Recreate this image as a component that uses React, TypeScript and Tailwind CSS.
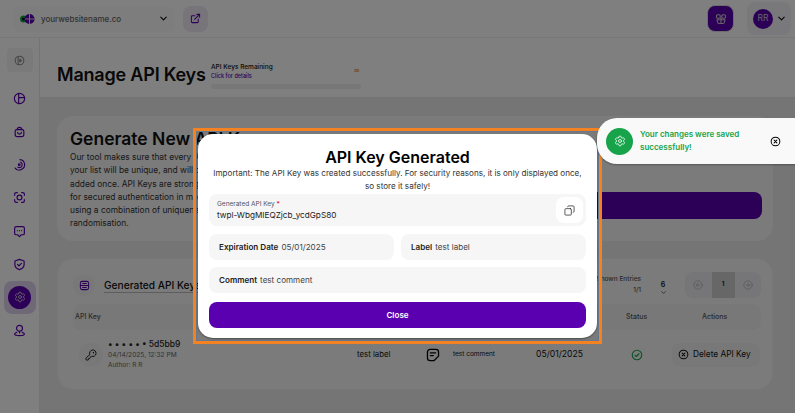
import React from "react";
import {
  ChevronDown, ExternalLink, Settings, KeyRound, CircleArrowLeft, CircleArrowRight, Copy,
} from "lucide-react";

type P = { className?: string; size?: number };
const Svg = ({ className, size = 13, children }: P & { children: React.ReactNode }) => (
  <svg width={size} height={size} viewBox="0 0 24 24" fill="none" stroke="currentColor" strokeWidth={2.2} strokeLinecap="round" strokeLinejoin="round" className={className}>
    {children}
  </svg>
);
const IPie = (p: P) => <Svg {...p}><circle cx="12" cy="12" r="9.5" /><path d="M10.5 2.5v19M10.5 10.5h11" /></Svg>;
const IBag = (p: P) => <Svg {...p}><path d="M7 8.5h10a3 3 0 0 1 3 3v6a4 4 0 0 1-4 4H8a4 4 0 0 1-4-4v-6a3 3 0 0 1 3-3z" /><path d="M8 8.5a4 4 0 0 1 8 0" /><path d="M8.5 13.5a3.5 3.5 0 0 0 7 0" /></Svg>;
const ISpiral = (p: P) => <Svg {...p}><path d="M13 3a9.5 9.5 0 0 1 4 17.5 9.5 9.5 0 0 1-13-2" /><path d="M14 7.5a5.5 5.5 0 0 1 1 9 5.5 5.5 0 0 1-6 .5" /><circle cx="11.5" cy="12.5" r="1.5" /></Svg>;
const IScan = (p: P) => <Svg {...p}><path d="M3 8V6a3 3 0 0 1 3-3h2M16 3h2a3 3 0 0 1 3 3v2M21 16v2a3 3 0 0 1-3 3h-2M8 21H6a3 3 0 0 1-3-3v-2" /><circle cx="12" cy="12" r="4.5" /></Svg>;
const IChat = (p: P) => <Svg {...p}><path d="M6 3h12a3 3 0 0 1 3 3v9a3 3 0 0 1-3 3h-2.5L12 21.5 8.5 18H6a3 3 0 0 1-3-3V6a3 3 0 0 1 3-3z" /><path d="M8 10.5h.01M12 10.5h.01M16 10.5h.01" /></Svg>;
const IShield = (p: P) => <Svg {...p}><path d="M12 2.5l8.5 3v6.5c0 4.5-3.5 8-8.5 9.5-5-1.5-8.5-5-8.5-9.5V5.5z" /><path d="M8.5 12l2.5 2.5 4.5-4.5" /></Svg>;
const IPin = (p: P) => <Svg {...p}><circle cx="12" cy="8" r="5.5" /><path d="M12 13.5v3M7 15.5c-2.5.7-4 1.7-4 3 0 1.8 4 3 9 3s9-1.2 9-3c0-1.3-1.5-2.3-4-3" /></Svg>;
const INote = (p: P) => <Svg {...p}><path d="M7 2.5h10a4.5 4.5 0 0 1 4.5 4.5v7L14 21.5H7A4.5 4.5 0 0 1 2.5 17V7A4.5 4.5 0 0 1 7 2.5z" /><path d="M7.5 8.5h9M7.5 13h5" /></Svg>;
const IRows = (p: P) => <Svg {...p}><rect x="3" y="3" width="18" height="18" rx="4" /><path d="M3 12h18M8 7.5h8M8 16.5h8" /></Svg>;
const ICheck = (p: P) => <Svg {...p}><circle cx="12" cy="12" r="9.5" /><path d="M8 12.5l2.8 2.5L16 9.5" /></Svg>;
const IX = (p: P) => <Svg {...p}><circle cx="12" cy="12" r="9.5" /><path d="M9 9l6 6M15 9l-6 6" /></Svg>;
const IPlay = (p: P) => <Svg {...p}><circle cx="12" cy="12" r="9.5" /><path d="M9 5v14M12.5 9l3.5 3-3.5 3z" /></Svg>;
const ITeam = (p: P) => <Svg {...p}><rect x="3" y="3.5" width="7.5" height="7" rx="2.5" /><rect x="13.5" y="3.5" width="7.5" height="7" rx="2.5" /><path d="M4 13.5h16l-1 4.5a3.5 3.5 0 0 1-3.5 3h-7A3.5 3.5 0 0 1 5 18z" /><path d="M12 10.5v10" /></Svg>;

const side = [IPie, IBag, ISpiral, IScan, IChat, IShield];

export default function App() {
  return (
    <div className="relative w-[795px] h-[413px] overflow-hidden bg-white font-['Inter',sans-serif] text-[#111]">
      <header className="h-[38px] flex items-center border-b border-[#eee] pl-[13px] pr-[4px]">
        <div className="w-[162px] h-[26px] flex items-center rounded-lg bg-[#fafafa] pl-[6px] pr-[5px]">
          <svg width="16" height="12" viewBox="0 0 16 12" className="mr-[6px] shrink-0">
            <circle cx="4.5" cy="6" r="3.5" fill="#16a34a" />
            <circle cx="4.5" cy="6" r="1.5" fill="#111" />
            <circle cx="10.5" cy="6" r="5" fill="#5b00b0" />
            <path d="M10.5 1v10M6 6h9" stroke="#fff" strokeWidth="0.8" />
          </svg>
          <span className="text-[8px] font-medium text-[#666]">yourwebsitename.co</span>
          <ChevronDown className="ml-auto mr-[1px] text-black" size={11} strokeWidth={2.2} />
        </div>
        <div className="ml-[8px] w-[25px] h-[26px] rounded-lg bg-[#eeeaf3] flex items-center justify-center">
          <ExternalLink size={11} strokeWidth={2.2} className="text-[#5b00b0]" />
        </div>
        <div className="ml-auto w-[27px] h-[27px] rounded-lg bg-[#5b00b0] border border-[#ddd] flex items-center justify-center">
          <ITeam size={12} className="text-[#ccc]" />
        </div>
        <div className="ml-[13px] w-[44px] h-[33px] rounded-lg bg-[#f3f1f6] flex items-center pl-[6px] gap-[3px]">
          <div className="w-[20px] h-[20px] rounded-full bg-[#5b00b0] text-[#ccc] text-[8.5px] flex items-center justify-center">RR</div>
          <ChevronDown size={11} strokeWidth={2.2} className="text-black" />
        </div>
      </header>

      <div className="flex h-[375px]">
        <aside className="w-[40px] shrink-0 border-r border-[#e8e8e8] flex flex-col items-center pt-[10px]">
          <div className="w-[26px] h-[24px] rounded bg-[#f4f4f4] flex items-center justify-center">
            <IPlay size={11} className="text-[#888]" />
          </div>
          <div className="mt-[19.5px] flex flex-col items-center gap-[20.3px]">
            {side.map((I, i) => (
              <I key={i} size={13} className="text-[#5b00b0]" />
            ))}
          </div>
          <div className="mt-[10px] w-[32px] h-[33px] rounded-lg bg-[#dfd2ee] flex items-center justify-center">
            <div className="w-[23px] h-[23px] rounded-full bg-[#5b00b0] flex items-center justify-center">
              <Settings size={12} strokeWidth={1.6} className="text-[#ddd]" />
            </div>
          </div>
          <IPin size={13} className="mt-[10.5px] text-[#5b00b0]" />
        </aside>

        <main className="flex-1 min-w-0 bg-[#ebebeb] pr-[22px]">
          <div className="-mr-[22px] h-[60px] bg-white border-b border-[#e8e8e8] flex items-center pl-[17px]">
            <h1 className="w-[154px] shrink-0 text-[18px] font-semibold tracking-[-0.2px] mt-[14px] whitespace-nowrap">Manage API Keys</h1>
            <div className="w-[150px] mt-[16px]">
              <div className="flex items-start justify-between">
                <div>
                  <div className="text-[6.5px] font-medium leading-[9px]">API Keys Remaining</div>
                  <div className="text-[5.5px] font-medium leading-[9px] text-[#5b00b0]">Click for details</div>
                </div>
                <span className="text-[8px] font-['DejaVu_Sans',sans-serif] leading-[9px] mt-[3px] mr-[1px] text-[#ea7a1d]">∞</span>
              </div>
              <div className="h-[5px] mt-[3px] rounded-sm bg-[#eeeeee]" />
            </div>
          </div>

          <section className="mt-[18px] ml-[17px] h-[125px] rounded-2xl bg-[#f6f6f6] flex pl-[13px] pr-[11px] pt-[12px]">
            <div className="w-[300px]">
              <h2 className="text-[17.5px] font-semibold leading-[22px] whitespace-nowrap">Generate New API Keys</h2>
              <p className="text-[8.4px] leading-[13.3px] text-[#333] mt-[1px]">
                Our tool makes sure that every API Key in<br />your list will be unique, and will only be<br />added once. API Keys are strong keys used<br />for secured authentication in most cases,<br />using a combination of uniqueness and<br />randomisation.
              </p>
            </div>
            <div className="flex-1 h-[27px] mt-[64px] rounded-lg bg-[#5b00b0]" />
          </section>

          <section className="mt-[17px] ml-[17px] h-[132px] rounded-2xl bg-[#f6f6f6] border border-[#eee] pl-[15px] pr-[11px] pt-[13px]">
            <div className="flex items-center h-[26px]">
              <div className="w-[22px] h-[22px] rounded-full bg-[#f0f0f0] flex items-center justify-center">
                <IRows size={11} className="text-[#5b00b0]" />
              </div>
              <span className="ml-[9px] text-[10.2px] font-medium border-b border-[#bbb] leading-[14px]">Generated API Keys</span>
              <div className="ml-auto text-[6.5px] font-medium text-[#555] text-right leading-[11px]">
                <div>Shown Entries</div>
                <div>1/1</div>
              </div>
              <div className="ml-[13px] w-[18px] text-center text-[7px] font-semibold leading-[9px] mt-[6px]">
                6<ChevronDown size={7} className="mx-auto" />
              </div>
              <div className="ml-[13px] flex h-[26px] w-[76px] rounded-lg bg-[#ececf1] overflow-hidden">
                <div className="flex-1 flex items-center justify-center"><CircleArrowLeft size={10} strokeWidth={1.6} className="text-[#aaa]" /></div>
                <div className="w-[23px] bg-[#cfcfcf] flex items-center justify-center text-[6.5px] font-semibold">1</div>
                <div className="flex-1 flex items-center justify-center"><CircleArrowRight size={10} strokeWidth={1.6} className="text-[#aaa]" /></div>
              </div>
            </div>
            <div className="mt-[6px] h-[26px] rounded-lg bg-[#f1f1f1] grid grid-cols-[546px_72px_1fr] items-center pl-[2px] text-[7px] font-medium text-[#555]">
              <span>API Key</span>
              <span className="pl-[5px]">Status</span>
              <span className="pl-[9px]">Actions</span>
            </div>
            <div className="mt-[9px] flex items-center">
              <div className="ml-[6px] w-[24px] h-[24px] rounded-full bg-[#f1f1f1] flex items-center justify-center">
                <KeyRound size={12} strokeWidth={1.8} className="text-black" />
              </div>
              <div className="ml-[5px] w-[249px] leading-[10px]">
                <div className="text-[8.5px] font-medium leading-[11px] text-[#222]">• • • • • • 5d5bb9</div>
                <div className="text-[6.6px] text-[#666]">04/14/2025, 12:32 PM</div>
                <div className="text-[6.5px] text-[#666]">Author: R R</div>
              </div>
              <span className="w-[69px] text-[7.8px] whitespace-nowrap">test label</span>
              <INote size={14} className="text-black" />
              <span className="ml-[13px] w-[83px] text-[6.5px] whitespace-nowrap">test comment</span>
              <span className="w-[95px] text-[8.6px] whitespace-nowrap">05/01/2025</span>
              <ICheck size={12} className="text-[#16a34a] mr-[29px]" />
              <div className="w-[88px] h-[24px] rounded-lg bg-[#f1f1f1] flex items-center pl-[6px] gap-[4px] text-[8.3px] whitespace-nowrap">
                <IX size={11} />Delete API Key
              </div>
            </div>
          </section>
        </main>
      </div>

      <div className="absolute inset-0 bg-black/50" />

      <div className="absolute left-[193px] top-[128px] w-[409px] h-[216px] border-[3px] border-[#f58220]">
        <div className="h-full border border-[#66788c] px-[1px] pt-[2px]">
          <div className="h-[204px] rounded-[15px] bg-white px-[11px] pt-[12px] shadow-[0_1px_2px_rgba(0,0,0,0.4)]">
            <h3 className="text-center text-[16px] font-semibold leading-[22px] text-black">API Key Generated</h3>
            <p className="text-center text-[8.1px] leading-[13px] text-[#333] mt-[-1px]">
              Important: The API Key was created successfully. For security reasons, it is only displayed once, so store it safely!
            </p>
            <div className="mt-[1px] h-[32px] rounded-lg bg-[#f6f6f6] flex items-center pl-[8px] pr-[3px]">
              <div>
                <div className="text-[6.5px] leading-[9px] text-[#555]">Generated API Key <span className="text-red-600">*</span></div>
                <div className="text-[8.2px] leading-[12px] text-[#222]">twpl-WbgMIEQZjcb_ycdGpS80</div>
              </div>
              <div className="ml-auto w-[27px] h-[26px] rounded-lg bg-white flex items-center justify-center">
                <Copy size={11} strokeWidth={1.6} className="text-[#222] -scale-x-100" />
              </div>
            </div>
            <div className="mt-[8px] grid grid-cols-2 gap-[7px]">
              <div className="h-[26px] rounded-lg bg-[#f6f6f6] flex items-center pl-[10px] text-[8.1px] text-[#444] gap-[3px]">
                <b className="font-semibold text-[#222]">Expiration Date</b>05/01/2025
              </div>
              <div className="h-[26px] rounded-lg bg-[#f6f6f6] flex items-center pl-[10px] text-[8.1px] text-[#444] gap-[3px]">
                <b className="font-semibold text-[#222]">Label</b>test label
              </div>
            </div>
            <div className="mt-[7px] h-[26px] rounded-lg bg-[#f6f6f6] flex items-center pl-[10px] text-[8.1px] text-[#444] gap-[3px]">
              <b className="font-semibold text-[#222]">Comment</b>test comment
            </div>
            <button className="mt-[9px] w-full h-[26px] rounded-lg bg-[#5b00b0] text-white text-[8.1px] font-semibold">Close</button>
          </div>
        </div>
      </div>

      <div className="absolute left-[597px] top-[118px] w-[210px] h-[46px] rounded-l-[20px] bg-[#f9f9f9] flex items-center pl-[9px] shadow-[0_1px_2px_rgba(0,0,0,0.3)]">
        <div className="w-[27px] h-[27px] rounded-full bg-[#16a34a] flex items-center justify-center">
          <Settings size={12} strokeWidth={1.6} className="text-white" />
        </div>
        <div className="ml-[7px] w-[118px] text-[8px] font-semibold leading-[13px] text-[#16a34a]">Your changes were saved successfully!</div>
        <IX size={11} className="ml-[12px] text-black" />
      </div>
    </div>
  );
}
